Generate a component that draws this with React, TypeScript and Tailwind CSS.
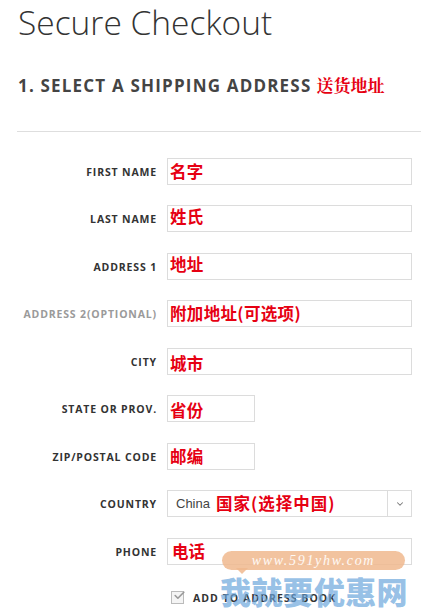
import { Check, ChevronDown } from 'lucide-react'

type Field = {
  label: string
  value: string
  short?: boolean
  muted?: boolean
  textPos?: string
}

const FIELDS: Field[] = [
  { label: 'FIRST NAME', value: '名字' },
  { label: 'LAST NAME', value: '姓氏', textPos: 'items-start' },
  { label: 'ADDRESS 1', value: '地址', textPos: 'items-start' },
  { label: 'ADDRESS 2(OPTIONAL)', value: '附加地址(可选项)', muted: true },
  { label: 'CITY', value: '城市', textPos: 'items-end' },
  { label: 'STATE OR PROV.', value: '省份', short: true, textPos: 'items-end' },
  { label: 'ZIP/POSTAL CODE', value: '邮编', short: true },
]

const cjk = "font-['Noto_Sans_CJK_SC',sans-serif]"

function Row({ f }: { f: Field }) {
  return (
    <div className="grid grid-cols-[157px_1fr] gap-[10px] h-[27px] items-center">
      <div
        className={`text-right text-[10.5px] font-bold tracking-[0.08em] pt-[3px] ${f.muted ? 'text-[#9a9a9a]' : 'text-[#333]'}`}
      >
        {f.label}
      </div>
      <div
        className={`h-[27px] border border-[#dcdcdc] bg-white flex ${f.textPos ?? 'items-center'} pl-[2px] ${f.short ? 'w-[88px]' : 'w-full'}`}
      >
        <span className={`${cjk} text-[16.5px] font-bold text-[#e60012] leading-[21px] tracking-[0.02em]`}>{f.value}</span>
      </div>
    </div>
  )
}

export default function App() {
  return (
    <div className="w-[421px] h-[615px] bg-white relative overflow-hidden font-['Open_Sans',sans-serif]">
      <h1 className="pl-[18px] pt-[2px] text-[33.5px] font-light leading-[40px] text-[#333]">
        Secure Checkout
      </h1>

      <div className="pl-[18px] mt-[30px] flex items-baseline gap-[5px]">
        <h2 className="text-[17px] font-bold text-[#444] tracking-[0.07em] leading-[22px]">
          1. SELECT A SHIPPING ADDRESS
        </h2>
        <span className="font-['Noto_Serif_CJK_SC','Noto_Sans_CJK_SC',serif] text-[17px] font-bold text-[#e60012]">
          送货地址
        </span>
      </div>

      <div className="ml-[17px] mt-[33px] border-t border-[#dedede]" />

      <div className="pr-[9px] mt-[26px] flex flex-col gap-[20.5px]">
        {FIELDS.map(f => (
          <Row key={f.label} f={f} />
        ))}

        <div className="grid grid-cols-[157px_1fr] gap-[10px] h-[27px] items-center">
          <div className="text-right text-[10.5px] font-bold tracking-[0.08em] pt-[3px] text-[#333]">COUNTRY</div>
          <div className="h-[27px] border border-[#dcdcdc] bg-white flex items-center">
            <span className="pl-[8px] font-['Liberation_Sans',sans-serif] text-[13px] text-[#444]">China</span>
            <span className={`${cjk} ml-[6px] text-[16.5px] font-bold text-[#e60012] tracking-[0.06em]`}>
              国家(选择中国)
            </span>
            <div className="ml-auto h-full w-[24px] border-l border-[#dcdcdc] flex items-center justify-center">
              <ChevronDown size={10} strokeWidth={2.5} className="text-[#777]" />
            </div>
          </div>
        </div>

        <div className="grid grid-cols-[157px_1fr] gap-[10px] h-[27px] items-center">
          <div className="text-right text-[10.5px] font-bold tracking-[0.08em] pt-[3px] text-[#333]">PHONE</div>
          <div className="h-[27px] border border-[#dcdcdc] bg-white flex items-center pl-[4px]">
            <span className={`${cjk} text-[16.5px] font-bold text-[#e60012]`}>电话</span>
          </div>
        </div>

        <div className="pl-[171px] mt-[4px] flex items-center gap-[9px]">
          <div className="w-[13px] h-[13px] border border-[#bbb] bg-[#f4f4f4] relative">
            <Check size={13} strokeWidth={3} className="absolute -top-[3px] left-[1px] text-[#999]" />
          </div>
          <span className="text-[10.5px] font-bold tracking-[0.1em] text-[#333] pt-[2px]">ADD TO ADDRESS BOOK</span>
        </div>
      </div>

      {/* watermark */}
      <div className="absolute left-[222px] top-[551px] w-[183px] h-[19px] rounded-full bg-[#f0b88e]/85 flex items-center justify-center">
        <span className="font-['Liberation_Serif',serif] italic text-[14px] tracking-[0.12em] text-white/90">
          www.591yhw.com
        </span>
      </div>
      <div className="absolute left-[236px] top-[568px] w-0 h-0 border-l-[6px] border-r-[6px] border-t-[6px] border-l-transparent border-r-transparent border-t-[#f0b88e]/85" />
      <div
        className={`absolute left-[220px] top-[571px] ${cjk} text-[31px] font-black leading-[40px] tracking-[0.01em] text-[#6aa6dc]/70`}
      >
        我就要优惠网
      </div>
    </div>
  )
}
